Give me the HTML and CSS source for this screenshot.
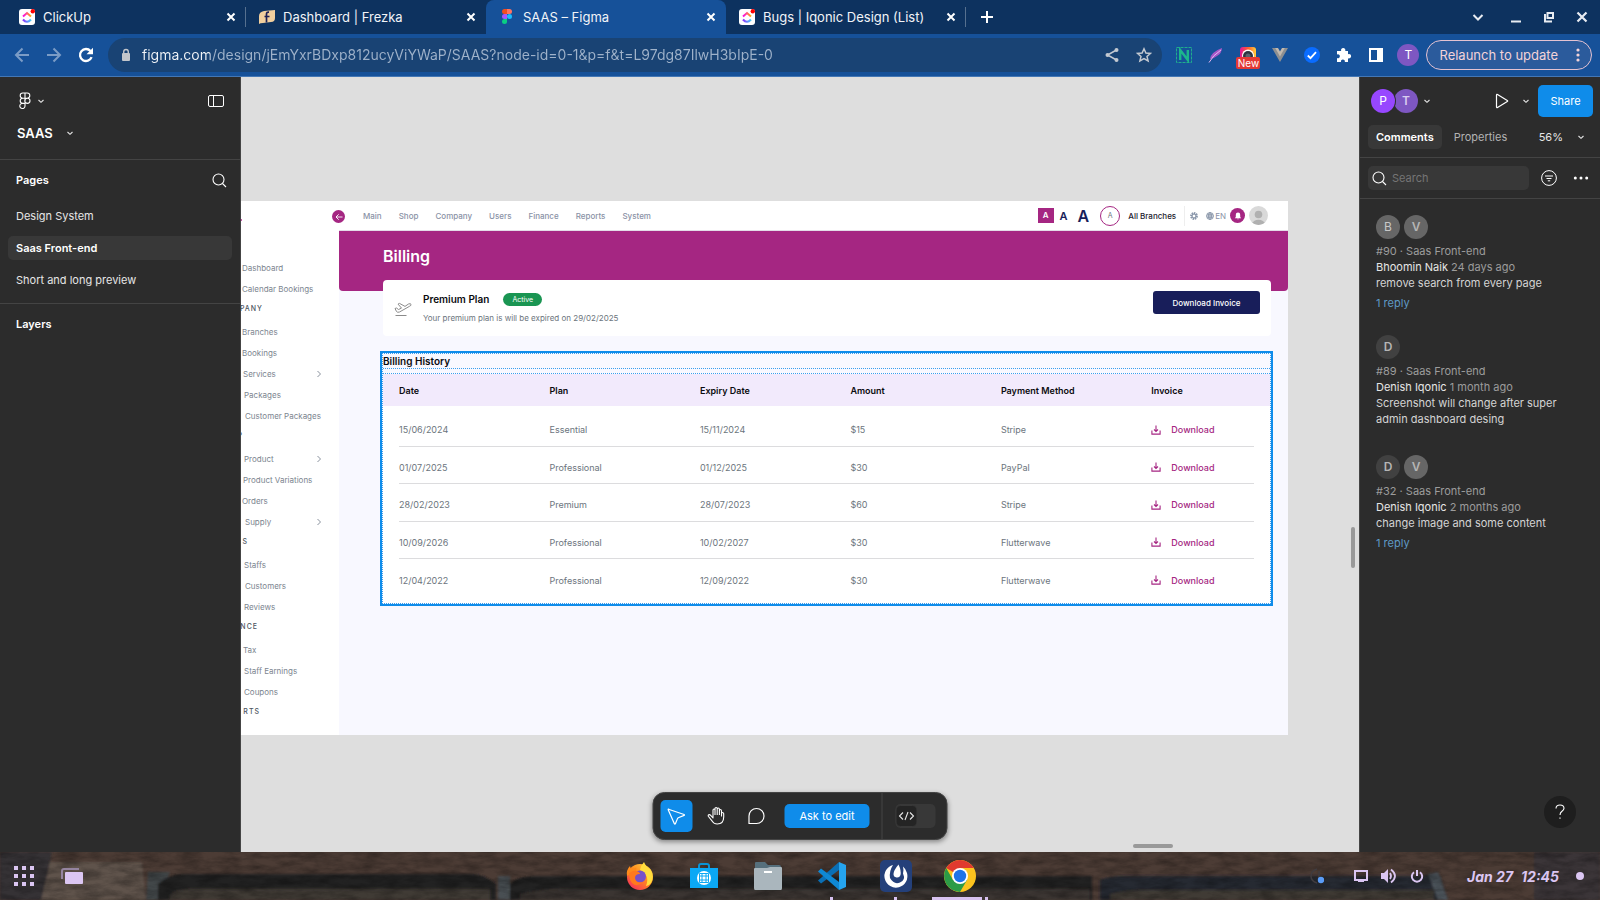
FILE: index.html
```html
<!DOCTYPE html>
<html lang="en">
<head>
<meta charset="utf-8">
<title>SAAS – Figma</title>
<link rel="stylesheet" href="styles.css">
</head>
<body>
<svg class="sprite" aria-hidden="true">
  <symbol id="i-x" viewBox="0 0 10 10"><path d="M1.5 1.5l7 7M8.500 1.500l-7 7" fill="none" stroke="#fff" stroke-width="2"/></symbol>
  <symbol id="i-chev" viewBox="0 0 8 8"><path d="M1.500 3l2.500 2.300L6.500 3" fill="none" stroke="#e6e6e6" stroke-width="1.100"/></symbol>
  <symbol id="i-right" viewBox="0 0 6 8"><path d="M1.500 1l3 3-3 3" fill="none" stroke="#8a929e" stroke-width="1"/></symbol>
  <symbol id="i-search" viewBox="0 0 16 16"><circle cx="7.500" cy="7.500" r="5.500" fill="none" stroke="#fff" stroke-width="1.100"/><path d="M11.500 11.500l3.500 3.500" stroke="#fff" stroke-width="1.100"/></symbol>
  <symbol id="i-dl" viewBox="0 0 10 10"><path d="M5 .5v6M3 4.500l2 2 2-2M.9 5.500v3.600h8.200V5.500" fill="none" stroke="#a52682" stroke-width="1.100"/></symbol>
  <symbol id="i-clickup" viewBox="0 0 16 16">
    <linearGradient id="cu1"><stop offset="0" stop-color="#ff02f0"/><stop offset="1" stop-color="#ffb000"/></linearGradient>
    <linearGradient id="cu2"><stop offset="0" stop-color="#8930fd"/><stop offset="1" stop-color="#49ccf9"/></linearGradient>
    <rect width="16" height="16" rx="3" fill="#fff"/><path d="M4 7.500l4-3.500 4 3.500" fill="none" stroke="url(#cu1)" stroke-width="2"/><path d="M4 10.500q4 4.500 8 0" fill="none" stroke="url(#cu2)" stroke-width="2.100"/><circle cx="13.800" cy="2.200" r="2.200" fill="#f00"/>
  </symbol>
</svg>

<header class="tabs">
  <div class="tab tab-sep"><svg class="ico16"><use href="#i-clickup"/></svg><span class="tab-title">ClickUp</span><button class="plain" aria-label="Close tab"><svg class="x"><use href="#i-x"/></svg></button></div>
  <div class="tab"><svg class="ico16" viewBox="0 0 16 16"><path d="M0 15V7q0-4 5-5l11-1v8q0 4-4 4l-8 1q-3 0-4 1z" fill="#f1cf9e"/><path d="M7.500 13.500V5q0-2 2.500-1.800M5.500 7.500h5" fill="none" stroke="#1b1f55" stroke-width="1.700"/></svg><span class="tab-title">Dashboard | Frezka</span><button class="plain" aria-label="Close tab"><svg class="x"><use href="#i-x"/></svg></button></div>
  <div class="tab active"><svg class="ico16" viewBox="0 0 16 16"><path d="M5.500 0H8v5H5.500a2.500 2.500 0 010-5z" fill="#f24e1e"/><path d="M8 0h2.500a2.500 2.500 0 010 5H8z" fill="#ff7262"/><path d="M5.500 5H8v5H5.500a2.500 2.500 0 010-5z" fill="#a259ff"/><circle cx="10.500" cy="7.500" r="2.500" fill="#1abcfe"/><path d="M5.500 10H8v2.500A2.500 2.500 0 115.500 10z" fill="#0acf83"/></svg><span class="tab-title">SAAS – Figma</span><button class="plain" aria-label="Close tab"><svg class="x"><use href="#i-x"/></svg></button></div>
  <div class="tab tab-sep"><svg class="ico16"><use href="#i-clickup"/></svg><span class="tab-title">Bugs | Iqonic Design (List)</span><button class="plain" aria-label="Close tab"><svg class="x"><use href="#i-x"/></svg></button></div>
  <button class="plain newtab" aria-label="New tab"><svg width="12" height="12" viewBox="0 0 12 12"><path d="M6 0v12M0 6h12" stroke="#fff" stroke-width="2"/></svg></button>
  <div class="winbtns">
    <button class="plain" aria-label="Search tabs"><svg width="12" height="12" viewBox="0 0 12 12"><path d="M1.500 4L6 8.500 10.500 4" fill="none" stroke="#e8ecf2" stroke-width="2"/></svg></button>
    <button class="plain" aria-label="Minimize"><svg width="12" height="12" viewBox="0 0 12 12"><path d="M1 10.500h10" stroke="#e8ecf2" stroke-width="2"/></svg></button>
    <button class="plain" aria-label="Restore"><svg width="12" height="12" viewBox="0 0 12 12"><path d="M4.500 2h5.500v5H4.500zM2 3v7.500h7" fill="none" stroke="#e8ecf2" stroke-width="2"/></svg></button>
    <button class="plain" aria-label="Close window"><svg width="12" height="12" viewBox="0 0 12 12"><path d="M1.500 1.500l9 9M10.500 1.500l-9 9" stroke="#e8ecf2" stroke-width="2.200"/></svg></button>
  </div>
</header>

<div class="toolbar">
  <div class="navbtns">
    <button class="plain" aria-label="Back"><svg class="ico16" viewBox="0 0 16 16"><path d="M15 8H2M8.500 1.500L2 8l6.500 6.500" fill="none" stroke="#7b9cc6" stroke-width="2"/></svg></button>
    <button class="plain" aria-label="Forward"><svg class="ico16" viewBox="0 0 16 16"><path d="M1 8h13M7.500 1.500L14 8l-6.500 6.500" fill="none" stroke="#7b9cc6" stroke-width="2"/></svg></button>
    <button class="plain" aria-label="Reload"><svg class="ico16" viewBox="0 0 16 16"><path d="M13.600 10.200A6 6 0 1112.500 4" fill="none" stroke="#fff" stroke-width="2.300"/><path d="M15 .8V7.300H8.500z" fill="#fff"/></svg></button>
  </div>
  <div class="omnibox">
    <svg width="10" height="14" viewBox="0 0 10 14"><rect x="1" y="5" width="8" height="8" rx="1" fill="#c3c6cb"/><path d="M2.700 6V3.800a2.300 2.300 0 014.600 0V6" fill="none" stroke="#c3c6cb" stroke-width="1.400"/></svg>
    <input class="url" type="text" aria-label="Address" value="figma.com/design/jEmYxrBDxp812ucyViYWaP/SAAS?node-id=0-1&amp;p=f&amp;t=L97dg87IlwH3bIpE-0">
    <button class="plain" aria-label="Share page"><svg class="ico16" viewBox="0 0 16 16"><path d="M12.500 3L3.500 8l9 5" fill="none" stroke="#c3c9d1" stroke-width="1.500"/><circle cx="12.500" cy="3" r="2" fill="#c3c9d1"/><circle cx="3.500" cy="8" r="2" fill="#c3c9d1"/><circle cx="12.500" cy="13" r="2" fill="#c3c9d1"/></svg></button>
    <button class="plain" aria-label="Bookmark"><svg class="ico16" viewBox="0 0 16 16"><path d="M8 1.800l1.900 4.200 4.600.4-3.500 3 1.100 4.500L8 11.500l-4.100 2.400L5 9.400l-3.500-3L6.100 6z" fill="none" stroke="#c3c9d1" stroke-width="1.500"/></svg></button>
  </div>
  <div class="exts">
    <svg class="ico16" viewBox="0 0 16 16"><rect x=".5" y=".5" width="15" height="15" fill="none" stroke="#1fae8c" stroke-dasharray="3 1"/><path d="M4.200 13V3l7.600 10V3" fill="none" stroke="#1cb68c" stroke-width="2.400"/></svg>
    <svg class="ico16" viewBox="0 0 16 16"><path d="M2 12Q3 5 14 1q0 5-5 8-3 2.500-7 3z" fill="#a458c8"/><path d="M1 15.500Q5 8 13 3" fill="none" stroke="#e3b5f1" stroke-width="1"/></svg>
    <span class="cam"><svg class="ico16" viewBox="0 0 16 16"><linearGradient id="ig" x1="0" x2="1"><stop offset="0" stop-color="#e1179b"/><stop offset=".5" stop-color="#ff5c2e"/><stop offset="1" stop-color="#ffcf3a"/></linearGradient><rect width="16" height="16" rx="3" fill="url(#ig)"/><circle cx="8" cy="8.500" r="6" fill="#fff"/><circle cx="8" cy="9" r="5" fill="#2d3440"/><circle cx="8" cy="9" r="2.500" fill="#5a6270"/></svg><span class="new">New</span></span>
    <svg class="ico16" viewBox="0 0 16 16"><path d="M0 1h5l3 5.500L11 1h5L8 15z" fill="#8d8f91"/><path d="M3.200 1H6l2 3.500L10 1h2.800L8 9.500z" fill="#c2b9ae"/></svg>
    <svg class="ico16" viewBox="0 0 16 16"><circle cx="8" cy="8" r="8" fill="#0a6cff"/><path d="M3.800 8.500l2.700 2.700 5.500-6" fill="none" stroke="#fff" stroke-width="1.800"/></svg>
    <svg class="ico16" viewBox="0 0 16 16"><path d="M1 4h4.200a2.200 2.200 0 114 0H12v3.200a2.200 2.200 0 110 4V15H8.800a2 2 0 10-3.800 0H1v-4a2 2 0 100-3.600z" fill="#fff"/></svg>
    <svg class="ico16" viewBox="0 0 16 16"><path d="M1 1h14v14H1zM3 3v10h6V3z" fill="#fff" fill-rule="evenodd"/></svg>
    <span class="me">T</span>
  </div>
  <button class="relaunch">Relaunch to update<svg width="4" height="14" viewBox="0 0 4 14"><circle cx="2" cy="2" r="1.600" fill="#f3d3d8"/><circle cx="2" cy="7" r="1.600" fill="#f3d3d8"/><circle cx="2" cy="12" r="1.600" fill="#f3d3d8"/></svg></button>
</div>

<div class="app">
  <aside class="left">
    <div class="file-head">
      <div class="row">
        <button class="plain menu" aria-label="Main menu"><svg width="12" height="18" viewBox="0 0 12 18"><path d="M6 1H3.800a2.600 2.600 0 000 5.200H6zM6 1h2.200a2.600 2.600 0 010 5.200H6zM6 6.200H3.800a2.600 2.600 0 000 5.200H6zM8.400 6.200a2.600 2.600 0 110 5.200 2.600 2.600 0 010-5.200zM6 11.400H3.800A2.600 2.600 0 106 14z" fill="none" stroke="#fff" stroke-width="1.100"/></svg><svg class="chev"><use href="#i-chev"/></svg></button>
        <button class="plain" aria-label="Toggle panel"><svg width="16" height="12" viewBox="0 0 16 12"><rect x=".5" y=".5" width="15" height="11" rx="1.500" fill="none" stroke="#fff"/><path d="M5.500 1v10" stroke="#fff"/></svg></button>
      </div>
      <button class="plain filename">SAAS<svg class="chev"><use href="#i-chev"/></svg></button>
    </div>
    <div class="pages">
      <div class="row pages-head"><h2>Pages</h2><button class="plain" aria-label="Find"><svg class="ico16"><use href="#i-search"/></svg></button></div>
      <a href="#" class="page">Design System</a>
      <a href="#" class="page current">Saas Front-end</a>
      <a href="#" class="page">Short and long preview</a>
    </div>
    <h2 class="layers">Layers</h2>
  </aside>

  <main class="canvas">
    <div class="board">
      <nav class="side">
        <span class="logo-tip"></span>
        <a href="#">Dashboard</a>
        <a href="#">Calendar Bookings</a>
        <h6 class="e21">PANY</h6>
        <a href="#">Branches</a>
        <a href="#">Bookings</a>
        <a href="#" class="in2">Services<svg><use href="#i-right"/></svg></a>
        <a href="#" class="in3">Packages</a>
        <a href="#" class="in4">Customer Packages</a>
        <h6 class="e2">P</h6>
        <a href="#" class="in3">Product<svg><use href="#i-right"/></svg></a>
        <a href="#" class="in2">Product Variations</a>
        <a href="#">Orders</a>
        <a href="#" class="in4">Supply<svg><use href="#i-right"/></svg></a>
        <h6 class="e7">S</h6>
        <a href="#" class="in3">Staffs</a>
        <a href="#" class="in4">Customers</a>
        <a href="#" class="in3">Reviews</a>
        <h6 class="e17">NCE</h6>
        <a href="#" class="in2">Tax</a>
        <a href="#" class="in3">Staff Earnings</a>
        <a href="#" class="in3">Coupons</a>
        <h6 class="e19">RTS</h6>
      </nav>
      <div class="content">
        <div class="topnav">
          <span class="collapse"><svg width="8" height="8" viewBox="0 0 8 8"><path d="M7.500 4H1M3.700 1.300L1 4l2.700 2.700" fill="none" stroke="#fff" stroke-width=".9"/></svg></span>
          <nav class="links"><a href="#">Main</a><a href="#">Shop</a><a href="#">Company</a><a href="#">Users</a><a href="#">Finance</a><a href="#">Reports</a><a href="#">System</a></nav>
          <div class="tools">
            <span class="fs fs-s">A</span><span class="fs fs-m">A</span><span class="fs fs-l">A</span>
            <span class="ring">A</span><span class="branch">All Branches</span>
            <span class="vr"></span>
            <svg width="8" height="8" viewBox="0 0 8 8"><circle cx="4" cy="4" r="2.900" fill="none" stroke="#8a97ab" stroke-width="2" stroke-dasharray="1.500 .7"/><circle cx="4" cy="4" r="2" fill="none" stroke="#7c8aa0"/></svg>
            <span class="lang"><svg width="8" height="8" viewBox="0 0 8 8"><g fill="none" stroke="#8390a5" stroke-width=".8"><circle cx="4" cy="4" r="3.500"/><ellipse cx="4" cy="4" rx="1.600" ry="3.500"/><path d="M.5 4h7M1 2.300h6M1 5.700h6M4 .5v7"/></g></svg>EN</span>
            <span class="bell"><svg width="8" height="8" viewBox="0 0 8 8"><path d="M4 .5a2.200 2.200 0 012.200 2.300V5l1 1.300H.8L1.800 5V2.800A2.200 2.200 0 014 .5zM3 6.700h2L4 7.600z" fill="#fff"/></svg></span>
            <svg class="user" viewBox="0 0 20 20"><clipPath id="uc"><circle cx="10" cy="10" r="10"/></clipPath><g clip-path="url(#uc)"><rect width="20" height="20" fill="#d9d9d9"/><circle cx="10" cy="9" r="4" fill="#b0b0b0"/><ellipse cx="10" cy="18.500" rx="6.500" ry="4" fill="#b0b0b0"/></g></svg>
          </div>
        </div>
        <div class="banner"><h1>Billing</h1></div>
        <div class="inner">
          <section class="plan">
            <svg width="18" height="16" viewBox="0 0 18 16"><g fill="none" stroke="#8b8b8b" stroke-width="1"><path d="M1.500 14.500h11"/><path d="M1 7.500l1.500-.5 2 1.500 3-1.400-3.500-4 1.500-.7 5.500 3L14.500 3q2-.8 2.500.3t-1.500 2L5.500 11q-2 .8-3-.5z"/></g></svg>
            <div class="plan-txt">
              <div class="plan-name"><h3>Premium Plan</h3><span class="badge">Active</span></div>
              <p>Your premium plan is will be expired on 29/02/2025</p>
            </div>
            <button class="invoice">Download Invoice</button>
          </section>
          <section class="history">
            <h3>Billing History</h3>
            <div class="tablebox">
            <table>
              <thead><tr><th>Date</th><th>Plan</th><th>Expiry Date</th><th>Amount</th><th>Payment Method</th><th>Invoice</th></tr></thead>
              <tbody>
                <tr><td>15/06/2024</td><td>Essential</td><td>15/11/2024</td><td>$15</td><td>Stripe</td><td><a href="#"><svg><use href="#i-dl"/></svg>Download</a></td></tr>
                <tr><td>01/07/2025</td><td>Professional</td><td>01/12/2025</td><td>$30</td><td>PayPal</td><td><a href="#"><svg><use href="#i-dl"/></svg>Download</a></td></tr>
                <tr><td>28/02/2023</td><td>Premium</td><td>28/07/2023</td><td>$60</td><td>Stripe</td><td><a href="#"><svg><use href="#i-dl"/></svg>Download</a></td></tr>
                <tr><td>10/09/2026</td><td>Professional</td><td>10/02/2027</td><td>$30</td><td>Flutterwave</td><td><a href="#"><svg><use href="#i-dl"/></svg>Download</a></td></tr>
                <tr><td>12/04/2022</td><td>Professional</td><td>12/09/2022</td><td>$30</td><td>Flutterwave</td><td><a href="#"><svg><use href="#i-dl"/></svg>Download</a></td></tr>
              </tbody>
            </table>
            </div>
          </section>
        </div>
      </div>
    </div>

    <span class="scroll-v"></span><span class="scroll-h"></span>

    <div class="tools-bar">
      <div class="tools-left">
        <button class="tool on" aria-label="Move"><svg width="20" height="20" viewBox="0 0 20 20"><path d="M2 3.200L17.600 8.500q.8.400 0 .9L11.800 11.800q-.5.300-.8.800L8.900 17.800q-.5.900-1 0L1.700 3.700q-.2-.7.500-.5z" fill="none" stroke="#fff" stroke-width="1.200" stroke-linejoin="round"/></svg></button>
        <button class="tool" aria-label="Hand"><svg width="20" height="20" viewBox="0 0 20 20"><path d="M6.500 10.500V4.200q0-1.200 1-1.200t1 1.200V9M8.500 4.200V2.700q0-1.200 1.100-1.200t1.100 1.200V9M10.700 3q0-1 1.100-1t1.100 1.200V9M12.900 4.500q0-1 1-1t1.100 1.200V10.500M15 7.500q0-1 1-1t1.200 1.200V11q0 7-6.500 7-3.200 0-5-2.800L2 10.500q-.7-1.200.2-1.700 1-.5 2 .6l2.300 2.600V9" fill="none" stroke="#fff" stroke-width="1.100" stroke-linejoin="round"/></svg></button>
        <button class="tool" aria-label="Comment"><svg width="18" height="18" viewBox="0 0 18 18"><path d="M1.500 16.500V9A7.500 7.500 0 119 16.500z" fill="none" stroke="#fff" stroke-width="1.200" stroke-linejoin="round"/></svg></button>
        <button class="ask">Ask to edit</button>
      </div>
      <div class="tools-right"><button class="dev" aria-label="Dev mode"><span><svg width="16" height="10" viewBox="0 0 16 10"><path d="M4.500 1.500L1 5l3.500 3.500M11.500 1.500L15 5l-3.500 3.500M9.500 1l-3 8" fill="none" stroke="#e6e6e6" stroke-width="1.100"/></svg></span></button></div>
    </div>
  </main>

  <aside class="right">
    <div class="r-top">
      <span class="av av-p">P</span><span class="av av-t">T</span><svg class="chev"><use href="#i-chev"/></svg>
      <span class="grow"></span>
      <button class="plain play" aria-label="Present"><svg width="14" height="16" viewBox="0 0 14 16"><path d="M1.500 2v12q.2 1 1 .5l9.800-6q.8-.5 0-1l-9.800-6q-.8-.5-1 .5z" fill="none" stroke="#fff" stroke-width="1.200"/></svg></button>
      <svg class="chev"><use href="#i-chev"/></svg>
      <button class="share">Share</button>
    </div>
    <div class="r-tabs">
      <button class="rt sel">Comments</button><button class="rt">Properties</button>
      <span class="grow"></span>
      <button class="plain zoomv">56%<svg class="chev"><use href="#i-chev"/></svg></button>
    </div>
    <div class="r-search">
      <label class="sbox"><svg class="ico16"><use href="#i-search"/></svg><input type="search" placeholder="Search" aria-label="Search comments"></label>
      <button class="plain" aria-label="Filter"><svg class="ico16" viewBox="0 0 16 16"><circle cx="8" cy="8" r="7.400" fill="none" stroke="#fff"/><path d="M4 6h8M5.500 8.500h5M6.800 10.800h2.400" stroke="#fff"/></svg></button>
      <button class="plain" aria-label="More"><svg class="ico16" viewBox="0 0 16 16"><circle cx="2.300" cy="8" r="1.500" fill="#fff"/><circle cx="8" cy="8" r="1.500" fill="#fff"/><circle cx="13.700" cy="8" r="1.500" fill="#fff"/></svg></button>
    </div>
    <div class="comments">
      <article><div class="avs"><span class="g1">B</span><span class="g1 bold">V</span></div><p class="dim">#90 · Saas Front-end</p><p><b>Bhoomin Naik</b> <span class="dim">24 days ago</span></p><p>remove search from every page</p><a href="#">1 reply</a></article>
      <article><div class="avs"><span class="g2 bold">D</span></div><p class="dim">#89 · Saas Front-end</p><p><b>Denish Iqonic</b> <span class="dim">1 month ago</span></p><p>Screenshot will change after super admin dashboard desing</p></article>
      <article><div class="avs"><span class="g2 bold">D</span><span class="g1 bold">V</span></div><p class="dim">#32 · Saas Front-end</p><p><b>Denish Iqonic</b> <span class="dim">2 months ago</span></p><p>change image and some content</p><a href="#">1 reply</a></article>
    </div>
    <button class="help" aria-label="Help"><svg width="10" height="16" viewBox="0 0 10 16"><path d="M1 4.500Q1 1 5 1t4 3.300Q9 6 7 7.300T5 11" fill="none" stroke="#fff" stroke-width="1.100"/><rect x="4.400" y="13.500" width="1.200" height="1.200" fill="#fff"/></svg></button>
  </aside>
</div>

<footer class="taskbar">
  <svg class="wall" viewBox="0 0 1600 48" preserveAspectRatio="none" aria-hidden="true">
    <filter id="grain" x="0" y="0" width="100%" height="100%"><feTurbulence type="fractalNoise" baseFrequency=".05 .15" numOctaves="5" seed="4"/><feColorMatrix values="0 0 0 0 0  0 0 0 0 0  0 0 0 0 0  1.400 0 0 0 -.45"/></filter>
    <filter id="soft"><feGaussianBlur stdDeviation="1"/></filter>
    <rect width="1600" height="48" fill="#4c3c35"/>
    <g filter="url(#soft)">
      <path d="M0 0h52L42 48H0z" fill="#353135"/>
      <path d="M50 10h92l4 38H41z" fill="#5e524b"/>
      <path d="M148 20h22L158 48H146z" fill="#42474a"/>
      <path d="M158 48V32q10-9 24-10h290q12 0 24 10v16z" fill="#222224"/>
      <path d="M170 43q6-6 20-6h300v11H170z" fill="#403a36"/>
      <path d="M498 24h12v24h-12z" fill="#4a5052"/>
      <path d="M510 48V32q6-7 22-8h560v24z" fill="#222224"/>
      <path d="M520 42q20-5 40-5h530v11H520z" fill="#3a3431"/>
      <path d="M1100 48V28q10-4 24-4h300q10-4 16-1l8 25z" fill="#252a30"/>
      <path d="M1110 42q16-4 30-4h294v10h-324z" fill="#413b36"/>
      <path d="M1428 22l10-2 10 28h-10z" fill="#4d555c"/>
      <path d="M1534 0h66v48h-66z" fill="#3a3438"/>
    </g>
    <rect width="1600" height="48" filter="url(#grain)" opacity=".4"/>
  </svg>
  <div class="tk-left">
    <button class="plain" aria-label="Applications"><svg width="20" height="20" viewBox="0 0 20 20"><path d="M0 0h4v4H0zM8 0h4v4H8zM16 0h4v4h-4zM0 8h4v4H0zM8 8h4v4H8zM16 8h4v4h-4zM0 16h4v4H0zM8 16h4v4H8zM16 16h4v4h-4z" fill="#dbc6f2"/></svg></button>
    <button class="plain" aria-label="Workspaces"><svg width="22" height="16" viewBox="0 0 22 16"><path d="M1 11V3q0-2 2-2h15" fill="none" stroke="#94849f" stroke-width="2"/><rect x="4" y="4" width="18" height="12" rx="1" fill="#dbc6f2"/></svg></button>
  </div>
  <div class="dock">
    <button class="plain app-i" aria-label="Firefox"><svg width="28" height="28" viewBox="0 0 28 28"><linearGradient id="ff" x1="1" y1="0" x2=".2" y2="1"><stop offset="0" stop-color="#ffe14d"/><stop offset=".5" stop-color="#ff8a1e"/><stop offset="1" stop-color="#f5315a"/></linearGradient><circle cx="14" cy="15" r="13" fill="url(#ff)"/><path d="M1 14Q0 8 4 4l1 3 4-1q2-2 1 3z" fill="#ff8b1a"/><path d="M14 8q1-5 4-8 2 5 6 7 5 7 1 14-2 3-5 3 3-8-1-12-2-3-5-4z" fill="#ffdc3d"/><circle cx="14" cy="14.500" r="6" fill="#7650c8"/><path d="M3 11q5-3 7-2 4 1 4 3-5 0-5 4 1 6 8 4-6 6-11 1-3-4-3-10z" fill="#ff7a1c"/></svg></button>
    <button class="plain app-i" aria-label="Software"><svg width="28" height="26" viewBox="0 0 28 26"><path d="M9 6V3q0-2 2-2h6q2 0 2 2v3" fill="none" stroke="#0a94d6" stroke-width="2"/><rect y="5" width="28" height="20" fill="#0ba8f5"/><circle cx="14" cy="15" r="7" fill="#fff"/><path d="M9.500 13h9M9.500 17h9M12 10.500v9M16 10.500v9M9.500 10.500h9v9h-9z" fill="none" stroke="#0ba8f5" stroke-width="1"/></svg></button>
    <button class="plain app-i" aria-label="Files"><svg width="28" height="28" viewBox="0 0 28 28"><path d="M1 1q0-1 1-1h9l3 3h11q2 0 2 2v5H1z" fill="#566f7c"/><path d="M0 7q0-1 1-1h12l3-1h11q1 0 1 1v20q0 2-1 2H1q-1 0-1-2z" fill="#aab6bd"/><path d="M10 10h8" stroke="#fff" stroke-width="2"/></svg></button>
    <button class="plain app-i mark" aria-label="VS Code"><svg width="28" height="28" viewBox="0 0 28 28"><path d="M21 0l7 3v22l-7 3z" fill="#25a4ef"/><path d="M21 0v8L3 21.500 0 18.500z" fill="#0a6fb5"/><path d="M21 28v-8L3 6.500 0 9.500z" fill="#0f88d4"/></svg></button>
    <button class="plain app-i mark" aria-label="Mattermost"><svg width="32" height="32" viewBox="0 0 32 32"><rect width="32" height="32" rx="5" fill="#24407a"/><path d="M13 5A11.500 11.500 0 1027 13q-1-4-4-6.500 1 4 0 7Q26 20 20 22.500T10 18q-1-7 3-13z" fill="#fff"/><path d="M18.500 4.500q-5 6-5 9.500 0 3 3 3.500t4-2.500q1-4-2-10.500z" fill="#fff"/></svg></button>
    <button class="plain app-i open" aria-label="Chrome"><svg width="32" height="32" viewBox="0 0 32 32"><circle cx="16" cy="16" r="16" fill="#fcc31e"/><path d="M16 16L2.200 8A16 16 0 0129.800 8H16z" fill="#e03a2f"/><path d="M2.200 8A16 16 0 0016 32l7-12-7-4-7 4z" fill="#2c9b47"/><circle cx="16" cy="16" r="8" fill="#fff"/><circle cx="16" cy="16" r="6.200" fill="#1f73e8"/></svg></button>
  </div>
  <div class="tray">
    <svg width="14" height="16" viewBox="0 0 14 16"><path d="M7 1Q1 3 1 8t6 7M9 3v7" fill="none" stroke="#403c3f" stroke-width="1.500"/><circle cx="11" cy="12" r="3.200" fill="#5a9cf8"/></svg>
    <svg width="14" height="14" viewBox="0 0 14 14"><path d="M1 2h12v9H1z" fill="none" stroke="#dbc6f2" stroke-width="2"/><path d="M4 10h6v3H4z" fill="#dbc6f2"/></svg>
    <svg width="16" height="16" viewBox="0 0 16 16"><path d="M0 5h3l4-4v14l-4-4H0z" fill="#dbc6f2"/><path d="M9 5q2 3 0 6M10 1.500q8 6.500 0 13" fill="none" stroke="#dbc6f2" stroke-width="1.800"/></svg>
    <svg width="14" height="14" viewBox="0 0 14 14"><path d="M4 3.200a5.200 5.200 0 106 0M7 1v6" fill="none" stroke="#dbc6f2" stroke-width="2"/></svg>
    <time><span>Jan 27</span><span>12:45</span></time>
    <span class="dot"></span>
  </div>
</footer>
</body>
</html>
```
FILE: styles.css
```css
* { box-sizing: border-box; }
body { margin: 0; height: 100vh; display: flex; flex-direction: column; overflow: hidden; font-family: Inter, "Noto Sans", sans-serif; font-size: 11px; color: #e6e6e6; background: #2c2c2c; }
h1, h2, h3, h6, p { margin: 0; }
a { color: inherit; text-decoration: none; }
svg { display: block; flex: none; }
button, input { font: inherit; color: inherit; }
.sprite { position: absolute; width: 0; height: 0; }
.plain { border: 0; background: none; padding: 0; display: flex; align-items: center; }
.ico16 { width: 16px; height: 16px; }
.chev { width: 8px; height: 8px; }
.grow { flex: 1; }
.row { display: flex; align-items: center; justify-content: space-between; }

/* browser tabs */
.tabs { height: 34px; flex: none; display: flex; align-items: center; background: #0d325f; padding-left: 6px; color: #f1f4f8; }
.tab { width: 240px; height: 34px; display: flex; align-items: center; gap: 8px; padding: 0 10px 0 13px; font-size: 13px; position: relative; }
.tab-title { flex: 1; white-space: nowrap; }
.tab .x { width: 10px; height: 10px; }
.tab.active { background: #165199; border-radius: 8px 8px 0 0; }
.tab-sep::after { content: ""; position: absolute; right: 0; top: 7px; width: 1px; height: 20px; background: #56708f; }
.newtab { margin-left: 15px; }
.winbtns { margin-left: auto; display: flex; gap: 21px; padding-right: 12px; }
.winbtns button:first-child { margin-right: 5px; }

.toolbar { height: 43px; flex: none; display: flex; align-items: center; background: #165199; border-bottom: 1px solid #4377b5; padding: 0 8px 0 14px; }
.navbtns { display: flex; gap: 16px; margin-right: 14px; }
.omnibox { flex: 1; height: 34px; border-radius: 17px; background: #194374; display: flex; align-items: center; gap: 16px; padding: 0 10px 0 13px; }
.omnibox > svg { margin-right: -5px; }
.url { flex: 1; min-width: 0; border: 0; padding: 0; outline: 0; font-size: 14px; line-height: 20px; color: transparent; background: linear-gradient(90deg, #f1f4f8 68px, #9fb2ca 68px); -webkit-background-clip: text; background-clip: text; }
.exts { display: flex; align-items: center; gap: 16px; margin: 0 10px 0 14px; }
.cam { position: relative; }
.new { position: absolute; left: -4px; top: 10px; width: 24px; height: 12px; border-radius: 2px; background: #e53935; color: #fff; font-size: 10px; line-height: 12px; text-align: center; }
.me { width: 22px; height: 22px; margin: 0 -3px; border-radius: 50%; background: #7e57c2; color: #fff; font-size: 12px; line-height: 22px; text-align: center; }
.relaunch { height: 30px; border: 1px solid #e5c3d2; border-radius: 15px; background: #2b5b9c; color: #f3d3d8; font-size: 13px; padding: 0 11px 0 12px; display: flex; align-items: center; gap: 18px; white-space: nowrap; }

.app { flex: 1; min-height: 0; display: flex; }

/* left panel */
.left { width: 241px; flex: none; border-right: 1px solid #444; background: #2c2c2c; }
.left h2 { font-size: 11px; font-weight: 600; line-height: 16px; color: #fff; }
.file-head { height: 83px; border-bottom: 1px solid #444; padding: 15px 16px 0 17px; }
.menu { gap: 6px; padding-left: 2px; }
.filename { margin-top: 15px; font-size: 13px; line-height: 16px; font-weight: 600; color: #fff; gap: 13px; }
.pages { height: 144px; border-bottom: 1px solid #444; padding: 8px 8px 0; }
.pages-head { height: 24px; padding: 0 5px 0 8px; margin-bottom: 12px; }
.page { display: block; height: 24px; line-height: 24px; padding: 0 8px; border-radius: 5px; margin-bottom: 8px; color: #e6e6e6; }
.page.current { background: #383838; color: #fff; font-weight: 600; }
.layers { padding: 12px 16px; }

/* canvas */
.canvas { flex: 1; min-width: 0; position: relative; overflow: hidden; background: #dedede; }
.board { position: absolute; left: 0; right: 71px; top: 124px; height: 534px; display: grid; grid-template-columns: 98px 1fr; background: #f8f8ff; color: #6c757d; }
.side { background: #fff; padding-top: 56px; font-size: 8px; color: #7c858f; overflow: hidden; position: relative; }
.side a { height: 21px; display: flex; align-items: center; justify-content: space-between; padding: 0 17px 0 1px; }
.side a svg { width: 6px; height: 8px; }
.side .in2 { padding-left: 2px; }
.side .in3 { padding-left: 3px; }
.side .in4 { padding-left: 4px; }
.side h6 { height: 22px; display: flex; justify-content: flex-end; font-size: 7px; line-height: 19px; font-weight: 500; letter-spacing: 1px; color: #4d5661; }
.e21 { width: 22px; } .e2 { width: 2px; } .e7 { width: 7px; } .e17 { width: 17px; } .e19 { width: 19px; }
.logo-tip { position: absolute; left: 0; top: 18px; width: 1px; height: 2px; background: #c65aa9; }
.content { min-width: 0; }
.topnav { height: 30px; background: #fff; border-bottom: 1px solid #e3dce8; display: flex; align-items: center; justify-content: space-between; padding: 0 20px 0 24px; position: relative; font-size: 8px; }
.collapse { position: absolute; left: -7px; top: 9px; width: 13px; height: 13px; border-radius: 50%; background: #a52682; display: grid; place-items: center; }
.links { display: flex; gap: 17px; color: #8a92a6; font-weight: 500; }
.tools { display: flex; align-items: center; }
.fs { color: #181e5a; font-weight: 600; }
.fs-s { width: 16px; height: 15px; background: #a52682; color: #fff; text-align: center; line-height: 15px; font-size: 8px; }
.fs-m { font-size: 11px; margin-left: 6px; }
.fs-l { font-size: 16px; margin-left: 10px; line-height: 18px; }
.ring { width: 20px; height: 20px; border: 1px solid #a52682; border-radius: 50%; margin: 0 8px 0 11px; text-align: center; line-height: 18px; font-size: 7px; }
.branch { color: #22202e; font-weight: 500; }
.vr { width: 1px; height: 20px; background: #eee; margin: 0 5px 0 8px; }
.lang { display: flex; align-items: center; gap: 1px; margin-left: 8px; color: #8a92a6; }
.bell { width: 15px; height: 15px; border-radius: 50%; background: #a52682; display: grid; place-items: center; margin: 0 4px 0 4px; }
.user { width: 19px; height: 19px; }
.banner { height: 60px; background: #a52682; border-radius: 0 0 4px 4px; padding: 14px 44px; }
.banner h1 { color: #fff; font-size: 16px; line-height: 22px; font-weight: 600; }
.inner { padding: 0 17px 0 44px; margin-top: -11px; position: relative; }
.plan { height: 56px; background: #fff; border-radius: 4px; display: flex; align-items: flex-start; padding: 11px 11px 0; }
.plan > svg { margin-top: 10px; }
.plan-txt { flex: 1; margin-left: 11px; }
.plan-name { display: flex; align-items: center; gap: 14px; margin-top: 2px; }
.plan h3, .history h3 { font-size: 10px; line-height: 13px; font-weight: 600; color: #0b0b0f; }
.badge { width: 39px; height: 13px; border-radius: 7px; background: #1a9552; color: #fff; font-size: 7px; line-height: 13px; text-align: center; }
.plan p { font-size: 8px; line-height: 12px; margin-top: 6px; }
.invoice { height: 23px; width: 107px; border: 0; border-radius: 3px; background: #181e5a; color: #fff; font-size: 8px; font-weight: 500; padding: 0; }
.history { margin: 17px 0 0 -1px; border: 1px dotted #3a9fee; outline: 2px solid #0f8cea; }
.history h3 { height: 15px; line-height: 14px; border-bottom: 1px dotted #3a9fee; }
.tablebox { margin-top: 4px; border-top: 1px dotted #3a9fee; background: #fff; padding-bottom: 6px; }
table { width: 100%; padding: 0 16px; border-collapse: separate; border-spacing: 0; table-layout: fixed; font-size: 9px; background: linear-gradient(#f2eafc 32px, #fff 32px); }
th { height: 32px; padding: 0; text-align: left; color: #0b0b0f; font-weight: 600; }
th:not(:last-child) { width: 17.6%; }
tbody::before { content: ""; display: table-row; height: 3px; }
td { height: 38px; padding: 4px 0 0; border-bottom: 1px solid #dcdcde; }
tr:nth-child(even) td { height: 37px; }
tr:last-child td { border-bottom: 0; }
td a { display: flex; align-items: center; gap: 10px; color: #a52682; font-weight: 500; }
td a svg { width: 10px; height: 10px; }
.scroll-v { position: absolute; right: 4px; top: 450px; width: 4px; height: 41px; border-radius: 2px; background: #999; }
.scroll-h { position: absolute; right: 186px; bottom: 4px; width: 40px; height: 4px; border-radius: 2px; background: #999; }
.tools-bar { position: absolute; left: 50%; bottom: 12px; transform: translateX(-50%); height: 48px; display: flex; border-radius: 12px; background: #2c2c2c; border: 1px solid #444; box-shadow: 0 2px 5px rgba(0,0,0,.4); }
.tools-left { display: flex; align-items: center; gap: 8px; padding: 0 12px 0 7px; border-right: 1px solid #444; }
.tool { width: 32px; height: 32px; border: 0; border-radius: 5px; background: none; padding: 0; display: grid; place-items: center; }
.tool.on { background: #0f8cea; }
.ask { height: 24px; width: 85px; margin-left: 4px; border: 0; border-radius: 5px; background: #0f8cea; color: #fff; padding: 0; }
.tools-right { display: flex; align-items: center; padding: 0 11px 0 13px; }
.dev { width: 40px; height: 24px; padding: 0; border: 0; border-radius: 5px; background: #383838; }
.dev span { width: 22px; height: 22px; border: 1px solid #383838; border-radius: 5px; background: #242424; display: grid; place-items: center; }

/* right panel */
.right { width: 241px; flex: none; border-left: 1px solid #444; background: #2c2c2c; position: relative; }
.r-top { display: flex; align-items: center; height: 48px; padding: 0 7px 0 11px; }
.av { width: 24px; height: 24px; border-radius: 50%; text-align: center; line-height: 24px; font-size: 12px; color: #fff; }
.av-p { background: #9747ff; z-index: 1; box-shadow: 0 0 0 1px #2c2c2c; }
.av-t { background: #7e57c2; margin: 0 5px 0 -1px; font-weight: 600; color: #d9cdf0; }
.play { margin-right: 13px; }
.share { height: 32px; width: 55px; margin-left: 8px; border: 0; border-radius: 5px; background: #0f8cea; color: #fff; padding: 0; }
.r-tabs { height: 33px; display: flex; align-items: flex-start; gap: 4px; padding: 0 15px 0 8px; border-bottom: 1px solid #444; }
.rt { height: 24px; padding: 0 8px; border: 0; border-radius: 5px; background: none; color: #b3b3b3; }
.rt.sel { background: #383838; color: #fff; font-weight: 600; }
.zoomv { height: 24px; gap: 14px; }
.r-search { height: 41px; display: flex; align-items: center; gap: 16px; padding: 0 11px 0 8px; border-bottom: 1px solid #444; }
.sbox { flex: 1; min-width: 0; height: 24px; margin-right: -4px; border-radius: 5px; background: #383838; display: flex; align-items: center; gap: 5px; padding-left: 3px; }
.sbox input { flex: 1; min-width: 0; border: 0; outline: 0; background: none; padding: 0; }
.sbox input::placeholder { color: #757575; }
.comments { padding: 16px 24px 0 16px; }
article { line-height: 16px; padding-bottom: 28px; color: #d4d4d4; }
article b { font-weight: 400; color: #e6e6e6; }
article a { display: block; margin: 4px 0 -4px; color: #5f9ac6; }
.dim { color: #9c9c9c; }
.avs { display: flex; gap: 4px; margin-bottom: 4px; }
.avs span { width: 24px; height: 24px; border-radius: 50%; text-align: center; line-height: 24px; font-size: 12px; color: #c8c8c8; }
.avs .g1 { background: #666; }
.avs .g2 { background: #414141; color: #a8a8a8; }
.avs .bold { font-weight: 600; color: #b5b5b5; }
.help { position: absolute; right: 24px; bottom: 24px; width: 32px; height: 32px; border: 0; border-radius: 50%; background: #1e1e1e; display: grid; place-items: center; padding: 0; }

/* desktop dock */
.taskbar { height: 48px; flex: none; position: relative; display: grid; grid-template-columns: 1fr auto 1fr; align-items: center; overflow: hidden; }
.wall { position: absolute; left: 0; top: 0; width: 100%; height: 100%; }
.tk-left, .dock, .tray { position: relative; display: flex; align-items: center; }
.tk-left { gap: 27px; padding-left: 14px; }
.dock { gap: 16px; }
.app-i { width: 48px; height: 48px; justify-content: center; position: relative; }
.mark::after, .open::after, .open::before { content: ""; position: absolute; bottom: 0; left: 22px; width: 3px; height: 3px; background: #d8c2f0; }
.open::after { left: -4px; width: 50px; }
.open::before { left: 49px; }
.tray { justify-content: flex-end; gap: 13px; padding-right: 16px; }
.tray svg:first-child { margin-right: 17px; }
.tray time { margin: 0 4px 0 30px; display: flex; gap: 8px; font-size: 14px; font-weight: 700; font-style: italic; color: #dbc6f2; }
.dot { width: 8px; height: 8px; border-radius: 50%; background: #dbc6f2; }
```
